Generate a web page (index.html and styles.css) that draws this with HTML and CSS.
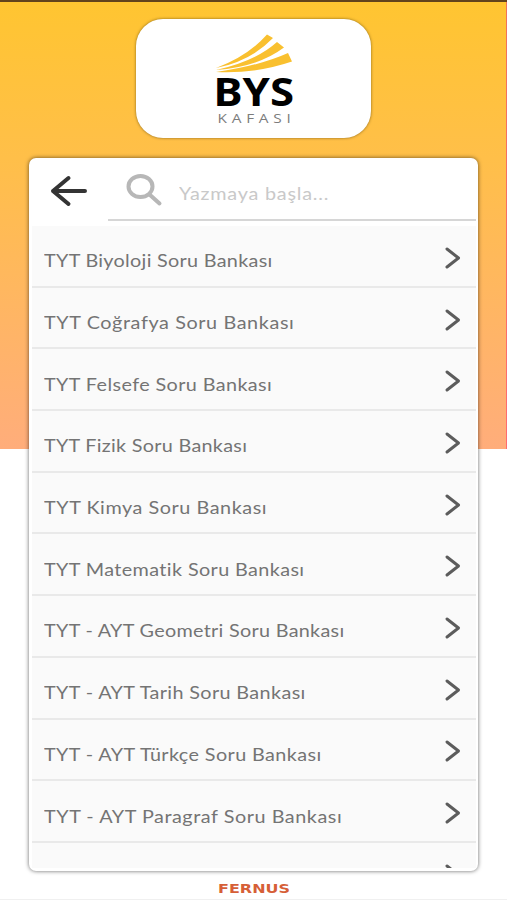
FILE: index.html
```html
<!DOCTYPE html>
<html lang="tr">

<head>
  <meta charset="UTF-8">
  <title>BYS Kafası</title>
  <link rel="stylesheet" href="styles.css">
</head>

<body>
  <div class="app">
    <div class="logo">
      <svg width="90" height="96" viewBox="210 30 90 96">
        <g fill="#f9c02f">
          <path d="M217 68Q249 56 268 34.500L274 38Q252 61 217 68Z" />
          <path d="M217 70Q257 61 278 42L285 47.500Q259 67 217 70Z" />
          <path d="M217 72Q260 66 289 53L293 61.500Q256 74 217 72Z" />
        </g>
        <text class="logo-name" x="214.500" y="105.500" textLength="80.500" lengthAdjust="spacingAndGlyphs">BYS</text>
        <text class="logo-sub" x="218.500" y="122.500" textLength="78" lengthAdjust="spacingAndGlyphs">KAFASI</text>
      </svg>
    </div>

    <div class="panel">
      <div class="search-bar">
        <button class="back">
          <svg width="38" height="32" viewBox="0 0 38 32">
            <path d="M18.500 3L3 16L18.500 29M3 16H35" />
          </svg>
        </button>
        <div class="search">
          <svg width="38" height="34" viewBox="0 0 38 34">
            <ellipse cx="15.500" cy="13.500" rx="12" ry="10.500" />
            <path d="M24.500 21.500L34.500 30.500" />
          </svg>
          <input type="text" placeholder="Yazmaya başla...">
        </div>
      </div>

      <div class="list" id="list"></div>
    </div>

    <div class="footer">
      <svg width="74" height="12" viewBox="0 0 74 12">
        <text x="1" y="10" textLength="72" lengthAdjust="spacingAndGlyphs">FERNUS</text>
      </svg>
    </div>
  </div>

  <script>
    const books = [
      { name: 'TYT Biyoloji Soru Bankası', spacing: 0.27 },
      { name: 'TYT Coğrafya Soru Bankası', spacing: 0.55 },
      { name: 'TYT Felsefe Soru Bankası', spacing: 0.36 },
      { name: 'TYT Fizik Soru Bankası', spacing: 0.26 },
      { name: 'TYT Kimya Soru Bankası', spacing: 0.5 },
      { name: 'TYT Matematik Soru Bankası', spacing: 0.35 },
      { name: 'TYT - AYT Geometri Soru Bankası', spacing: 0.27 },
      { name: 'TYT - AYT Tarih Soru Bankası', spacing: 0.34 },
      { name: 'TYT - AYT Türkçe Soru Bankası', spacing: 0.36 },
      { name: 'TYT - AYT Paragraf Soru Bankası', spacing: 0.49 },
      { name: '', spacing: 0 }
    ]

    document.getElementById('list').innerHTML = books.map(book => `
      <div class="row">
        <span style="letter-spacing: ${book.spacing}px">${book.name}</span>
        <svg width="18" height="24" viewBox="0 0 18 24">
          <path d="M3 3L14.500 12L3 21" />
        </svg>
      </div>
    `).join('')
  </script>
</body>

</html>
```
FILE: styles.css
```css
* {
  box-sizing: border-box;
}

body {
  margin: 0;
  font-family: Lato, "Open Sans", sans-serif;
}

.app {
  display: flex;
  flex-direction: column;
  align-items: center;
  height: 900px;
  overflow: hidden;
  padding-top: 17px;
  border-top: 2px solid #63431c;
  border-bottom: 1px solid #f0f0f0;
  background:
    linear-gradient(#ef7458, #ff6c70) right top / 1px 447px no-repeat,
    linear-gradient(#ffc531 0, #ffbf49 35%, #ffad7b 100%) left top / 100% 447px no-repeat,
    #ffffff;
}

/* Logo card */
.logo {
  width: 235px;
  height: 119px;
  padding-top: 11px;
  border-radius: 27px;
  background: #ffffff;
  box-shadow: 0 0 3px rgba(70, 50, 0, 0.65);
  text-align: center;
}

.logo-name {
  font: bold 40px "Noto Sans", sans-serif;
}

.logo-sub {
  font: 13px "Open Sans", sans-serif;
  letter-spacing: 4px;
  fill: #7c7c7c;
}

/* White panel with search and list */
.panel {
  display: flex;
  flex-direction: column;
  width: 449px;
  height: 713px;
  margin-top: 20px;
  padding: 0 2px 3px 3px;
  border-radius: 7px;
  background: #ffffff;
  box-shadow: 0 0 4px rgba(0, 0, 0, 0.6);
}

.search-bar {
  display: flex;
  flex: none;
  height: 68px;
}

.back {
  width: 76px;
  padding: 17px 0 0 18px;
  border: none;
  background: none;
  text-align: left;
  line-height: 0;
  align-self: flex-start;
}

.back svg,
.search svg,
.row svg {
  flex: none;
  fill: none;
  stroke-linecap: round;
  stroke-linejoin: round;
}

.back svg {
  stroke: #343434;
  stroke-width: 4;
}

.search {
  display: flex;
  flex: 1;
  height: 63px;
  padding: 15px 0 0 17px;
  border-bottom: 2px solid #d6d6d6;
}

.search svg {
  stroke: #b7b7b7;
  stroke-width: 4;
}

.search input {
  width: 250px;
  height: 40px;
  margin-left: 16px;
  padding: 0;
  border: none;
  outline: none;
  background: none;
  font: 18px Lato, sans-serif;
  letter-spacing: 0.7px;
  transform: scaleX(1.1);
  transform-origin: left;
}

.search input::placeholder {
  color: #c9c9c9;
}

.list {
  flex: 1;
  overflow: hidden;
  background: #fafafa;
}

.row {
  display: flex;
  align-items: center;
  justify-content: space-between;
  height: 61.700px;
  padding: 4px 14px 0 12px;
  border-bottom: 2px solid #e9e9e9;
  color: #747474;
  font-size: 18px;
}

.row span {
  padding-top: 5px;
  transform: scaleX(1.1);
  transform-origin: left;
}

.row svg {
  stroke: #5c5c5c;
  stroke-width: 3;
}

.footer {
  padding-top: 12px;
  line-height: 0;
}

.footer text {
  font: bold 12px "DejaVu Sans", sans-serif;
  fill: #d65f37;
}
```
